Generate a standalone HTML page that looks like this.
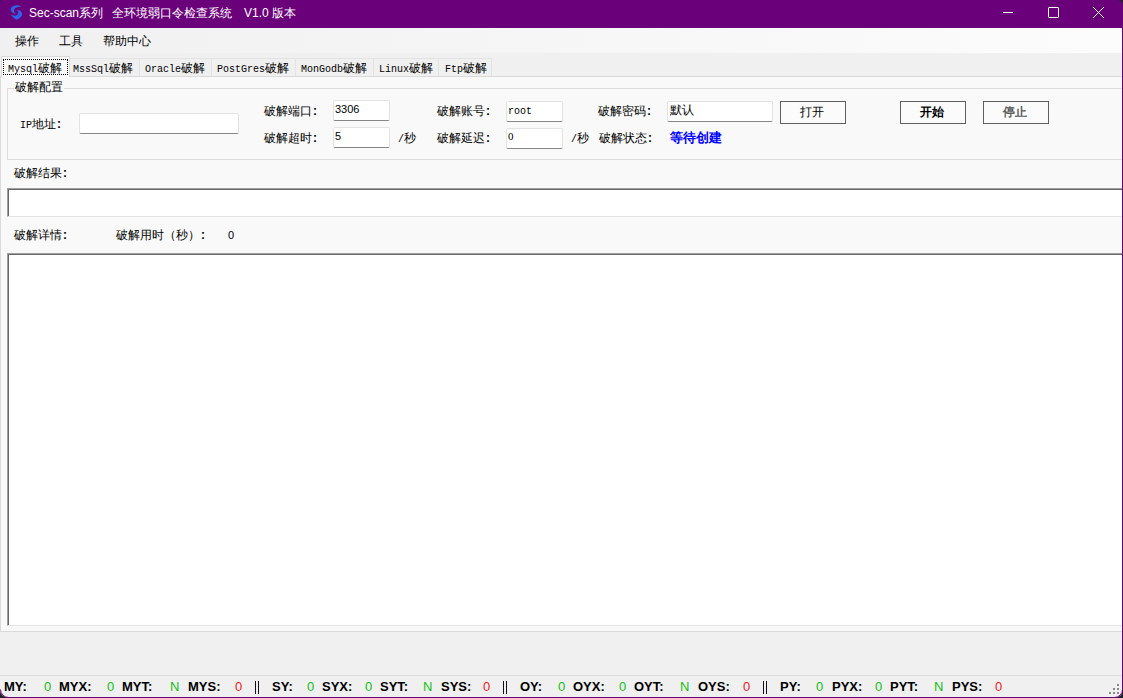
<!DOCTYPE html>
<html><head><meta charset="utf-8">
<style>
*{box-sizing:border-box;margin:0;padding:0}
html,body{width:1123px;height:698px;overflow:hidden;background:#f0f0f0;font-family:"Liberation Sans",sans-serif;font-size:12px;color:#000}
.a{position:absolute;white-space:nowrap;line-height:14px}
.c{display:inline-block;width:12px;padding-left:1px;font-weight:bold}
.m{font-family:"Liberation Mono",monospace;font-size:10px}
#title{position:absolute;left:0;top:0;width:1123px;height:28px;background:#6a007a}
#menu{position:absolute;left:0;top:28px;width:1122px;height:25px;background:linear-gradient(to right,#f0f0f0,#fcfcfc)}
#strip{position:absolute;left:0;top:53px;width:1122px;height:23px;background:#f0f0f0}
.tab{position:absolute;top:58px;height:18px;background:#f0f0f0;border:1px solid #e3e3e3;border-bottom:none}
#panel{position:absolute;left:0;top:76px;width:1122px;height:556px;background:#f9f9f9;border-top:1px solid #dadada;border-left:1px solid #dadada;border-bottom:1px solid #dadada}
.tb{position:absolute;background:#fff;border:1px solid #e3e3e3;border-bottom:1px solid #868686;border-radius:2px}
.btn{position:absolute;height:23px;background:#fbfbfb;border:1px solid #5f5f5f;text-align:center;line-height:21px;padding-right:2px}
.sb{position:absolute;top:679px;font-weight:bold;font-size:13px;line-height:15px}
.g{position:absolute;top:679px;font-size:13px;line-height:15px;color:#10c010}
.r{position:absolute;top:679px;font-size:13px;line-height:15px;color:#f02020}
</style></head><body>
<div id="title"></div>
<svg class="a" style="left:6px;top:2px" width="20" height="20" viewBox="0 0 20 20">
<path d="M15.6 4.9 C13 2.4 7 2.6 5 6 C4 8.5 5.5 11.2 10.2 11.9 C8.2 10.6 7.6 9 8.2 7.5 C9 5.6 12 4.6 15.6 4.9Z" fill="#2f62e6"/>
<path d="M10.8 8.2 C14 7.8 16.6 10 16.2 12.6 C15.8 15 12.8 17.2 10.2 17.8 C8 16.4 6 14.6 4.4 12.3 C6.2 13.6 9.2 14.2 11 13.1 C12.6 12 12.6 10 10.8 8.2Z" fill="#2f62e6"/>
</svg>
<div class="a" style="left:29px;top:6px;color:#fff">Sec-scan系列</div><div class="a" style="left:112px;top:6px;color:#fff">全环境弱口令检查系统</div><div class="a" style="left:244px;top:6px;color:#fff">V1.0 版本</div>
<div class="a" style="left:1003px;top:12px;width:10px;height:1px;background:#fff"></div>
<div class="a" style="left:1048px;top:7px;width:11px;height:11px;border:1px solid #fff;border-radius:1px"></div>
<svg class="a" style="left:1092px;top:6px" width="13" height="13" viewBox="0 0 13 13"><path d="M1 1L12 12M12 1L1 12" stroke="#fff" stroke-width="1"/></svg>

<div id="menu"></div>
<div class="a" style="left:15px;top:34px">操作</div>
<div class="a" style="left:59px;top:34px">工具</div>
<div class="a" style="left:103px;top:34px">帮助中心</div>

<div id="strip"></div>
<div id="panel"></div>
<!-- tabs -->
<div class="tab" style="left:69px;width:71px"></div>
<div class="tab" style="left:139px;width:73px"></div>
<div class="tab" style="left:211px;width:85px"></div>
<div class="tab" style="left:295px;width:79px"></div>
<div class="tab" style="left:373px;width:66px"></div>
<div class="tab" style="left:438px;width:54px"></div>
<div class="tab" style="left:1px;top:56px;height:21px;width:69px;background:#f9f9f9;border-color:#dadada"></div>
<div class="a" style="left:3px;top:59px;width:65px;height:16px;border:1px dotted #000"></div>
<div class="a" style="left:8px;top:61px"><span class="m">Mysql</span>破解</div>
<div class="a" style="left:73px;top:61px"><span class="m">MssSql</span>破解</div>
<div class="a" style="left:145px;top:61px"><span class="m">Oracle</span>破解</div>
<div class="a" style="left:217px;top:61px"><span class="m">PostGres</span>破解</div>
<div class="a" style="left:301px;top:61px"><span class="m">MonGodb</span>破解</div>
<div class="a" style="left:379px;top:61px"><span class="m">Linux</span>破解</div>
<div class="a" style="left:445px;top:61px"><span class="m">Ftp</span>破解</div>

<!-- group box -->
<div class="a" style="left:7px;top:88px;width:1116px;height:72px;border:1px solid #dcdcdc;border-right:none"></div>
<div class="a" style="left:14px;top:80px;padding:0 1px;background:#f9f9f9">破解配置</div>

<div class="a" style="left:20px;top:117px"><span class="m">IP</span>地址<span class="c">:</span></div>
<div class="tb" style="left:79px;top:113px;width:160px;height:21px"></div>

<div class="a" style="left:264px;top:104px">破解端口<span class="c">:</span></div>
<div class="tb" style="left:333px;top:100px;width:57px;height:21px"></div>
<div class="a" style="left:335px;top:102px;font-size:11px">3306</div>
<div class="a" style="left:264px;top:131px">破解超时<span class="c">:</span></div>
<div class="tb" style="left:333px;top:127px;width:57px;height:21px"></div>
<div class="a" style="left:335px;top:129px;font-size:11px">5</div>
<div class="a" style="left:398px;top:131px"><span class="m">/</span>秒</div>

<div class="a" style="left:437px;top:104px">破解账号<span class="c">:</span></div>
<div class="tb" style="left:506px;top:101px;width:57px;height:21px"></div>
<div class="a" style="left:508px;top:103px"><span class="m">root</span></div>
<div class="a" style="left:437px;top:131px">破解延迟<span class="c">:</span></div>
<div class="tb" style="left:506px;top:128px;width:57px;height:21px"></div>
<div class="a" style="left:508px;top:129px;font-family:'Liberation Serif',serif;font-size:11px">0</div>
<div class="a" style="left:571px;top:131px"><span class="m">/</span>秒</div>

<div class="a" style="left:598px;top:104px">破解密码<span class="c">:</span></div>
<div class="tb" style="left:667px;top:101px;width:106px;height:21px"></div>
<div class="a" style="left:670px;top:103px">默认</div>
<div class="a" style="left:599px;top:131px">破解状态<span class="c">:</span></div>
<div class="a" style="left:670px;top:131px;color:#0000ff;font-weight:bold;font-size:13px">等待创建</div>

<div class="btn" style="left:780px;top:101px;width:66px">打开</div>
<div class="btn" style="left:900px;top:101px;width:66px;font-weight:bold">开始</div>
<div class="btn" style="left:983px;top:101px;width:66px;color:#5c5c5c;font-weight:bold">停止</div>

<div class="a" style="left:14px;top:166px">破解结果<span class="c">:</span></div>
<div class="a" style="left:7px;top:188px;width:1115px;height:29px;background:#fff;border-top:1px solid #a0a0a0;border-left:1px solid #a0a0a0;box-shadow:inset 1px 1px 0 #696969;border-bottom:1px solid #e3e3e3"></div>

<div class="a" style="left:14px;top:228px">破解详情<span class="c">:</span></div>
<div class="a" style="left:116px;top:228px">破解用时（秒）<span class="c">:</span></div>
<div class="a" style="left:228px;top:228px;font-size:11px">0</div>
<div class="a" style="left:7px;top:253px;width:1115px;height:373px;background:#fff;border-top:1px solid #a0a0a0;border-left:1px solid #a0a0a0;box-shadow:inset 1px 1px 0 #696969;border-bottom:1px solid #e3e3e3"></div>

<!-- status bar -->
<div class="a" style="left:0;top:675px;width:1122px;height:1px;background:#dcdcdc"></div>
<div class="sb" style="left:4px">MY:</div><div class="g" style="left:44px">0</div>
<div class="sb" style="left:59px">MYX:</div><div class="g" style="left:107px">0</div>
<div class="sb" style="left:122px">MYT:</div><div class="g" style="left:170px">N</div>
<div class="sb" style="left:188px">MYS:</div><div class="r" style="left:235px">0</div>
<div class="a" style="left:255px;top:681px;width:1px;height:13px;background:#1a0a20"></div><div class="a" style="left:258px;top:681px;width:1px;height:13px;background:#1a0a20"></div>
<div class="sb" style="left:272px">SY:</div><div class="g" style="left:307px">0</div>
<div class="sb" style="left:322px">SYX:</div><div class="g" style="left:365px">0</div>
<div class="sb" style="left:380px">SYT:</div><div class="g" style="left:423px">N</div>
<div class="sb" style="left:441px">SYS:</div><div class="r" style="left:483px">0</div>
<div class="a" style="left:503px;top:681px;width:1px;height:13px;background:#1a0a20"></div><div class="a" style="left:506px;top:681px;width:1px;height:13px;background:#1a0a20"></div>
<div class="sb" style="left:520px">OY:</div><div class="g" style="left:558px">0</div>
<div class="sb" style="left:573px">OYX:</div><div class="g" style="left:619px">0</div>
<div class="sb" style="left:634px">OYT:</div><div class="g" style="left:680px">N</div>
<div class="sb" style="left:698px">OYS:</div><div class="r" style="left:743px">0</div>
<div class="a" style="left:763px;top:681px;width:1px;height:13px;background:#1a0a20"></div><div class="a" style="left:766px;top:681px;width:1px;height:13px;background:#1a0a20"></div>
<div class="sb" style="left:780px">PY:</div><div class="g" style="left:816px">0</div>
<div class="sb" style="left:832px">PYX:</div><div class="g" style="left:875px">0</div>
<div class="sb" style="left:890px">PYT:</div><div class="g" style="left:934px">N</div>
<div class="sb" style="left:952px">PYS:</div><div class="r" style="left:995px">0</div>
<!-- grip -->
<div class="a" style="left:1117px;top:684px;width:2px;height:2px;background:#8a8a8a"></div>
<div class="a" style="left:1113px;top:688px;width:2px;height:2px;background:#8a8a8a"></div>
<div class="a" style="left:1117px;top:688px;width:2px;height:2px;background:#8a8a8a"></div>
<div class="a" style="left:1109px;top:692px;width:2px;height:2px;background:#8a8a8a"></div>
<div class="a" style="left:1113px;top:692px;width:2px;height:2px;background:#8a8a8a"></div>
<div class="a" style="left:1117px;top:692px;width:2px;height:2px;background:#8a8a8a"></div>
<div class="a" style="left:0;top:697px;width:1123px;height:1px;background:#6a007a"></div>
<div class="a" style="left:1122px;top:0;width:1px;height:698px;background:#6a007a"></div>
<svg class="a" style="left:0;top:686px" width="12" height="12" viewBox="0 0 12 12"><path d="M0 3.5A8.5 8.5 0 0 0 8.5 12L0 12Z" fill="#1e2428"/><path d="M0.5 3.5A8 8 0 0 0 8.5 11.5L12 11.5" stroke="#6a007a" stroke-width="1" fill="none"/></svg>
<svg class="a" style="left:1111px;top:686px" width="12" height="12" viewBox="0 0 12 12"><path d="M12 3.5A8.5 8.5 0 0 1 3.5 12L12 12Z" fill="#1e2428"/><path d="M11.5 0L11.5 3.5A8 8 0 0 1 3.5 11.5L0 11.5" stroke="#6a007a" stroke-width="1" fill="none"/></svg>
<svg class="a" style="left:1117px;top:0" width="6" height="6" viewBox="0 0 6 6"><path d="M1 0L6 0L6 5A6 6 0 0 0 1 0Z" fill="#1e2428"/></svg>
<div class="a" style="left:0;top:0;width:1px;height:1px;background:#2e1e3c"></div>
</body></html>
